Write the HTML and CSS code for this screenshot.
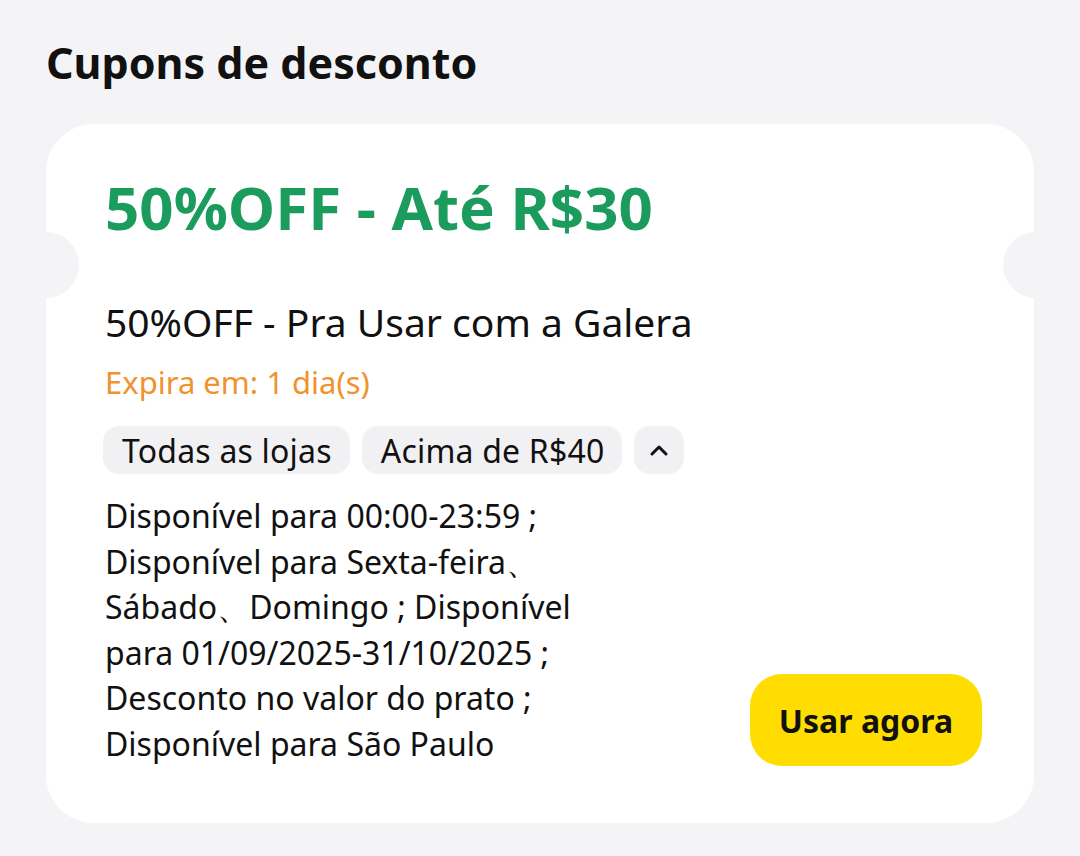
FILE: index.html
```html
<!DOCTYPE html>
<html lang="pt-br">
<head>
    <meta charset="UTF-8">
    <meta name="viewport" content="width=device-width, initial-scale=1.0">
    <title>Cupons de desconto</title>
    <link rel="stylesheet" href="styles.css">
</head>
<body>
    <div class="page">
        <h1 class="titulo">Cupons de desconto</h1>
        <div class="cupom">
            <h2 class="cupom-valor">50%OFF - Até R$30</h2>
            <div class="cupom-nome">50%OFF - Pra Usar com a Galera</div>
            <div class="cupom-expira">Expira em: 1 dia(s)</div>
            <div class="tags">
                <span class="tag">Todas as lojas</span>
                <span class="tag">Acima de R$40</span>
                <span class="tag tag-toggle">
                    <svg width="20" height="14" viewBox="0 0 20 14"><path d="M3 11 L10 4 L17 11" fill="none" stroke="#111" stroke-width="3" stroke-linecap="round" stroke-linejoin="round"/></svg>
                </span>
            </div>
            <div class="cupom-rodape">
                <p class="regras">Disponível para 00:00-23:59 ; Disponível para Sexta-feira、Sábado、Domingo ; Disponível para 01/09/2025-31/10/2025 ; Desconto no valor do prato ; Disponível para São Paulo</p>
                <button class="btn-usar">Usar agora</button>
            </div>
        </div>
    </div>
</body>
</html>
```

FILE: styles.css
```css
body {
    margin: 0;
    background: #f4f4f6;
    font-family: 'Noto Sans', 'Open Sans', Arial, sans-serif;
    color: #111;
}
.page {
    padding: 37px 46px 32px;
}
.titulo {
    margin: 0;
    font-size: 43px;
    line-height: 52px;
    font-weight: bold;
    color: #111;
}
.cupom {
    position: relative;
    margin-top: 35px;
    background: white;
    border-radius: 48px;
    padding: 48px 52px 57px 59px;
}
.cupom::before, .cupom::after {
    content: "";
    position: absolute;
    width: 66px;
    height: 66px;
    border-radius: 50%;
    background: #f4f4f6;
    top: 108px;
}
.cupom::before {
    left: -33px;
}
.cupom::after {
    right: -35px;
}
.cupom-valor {
    margin: 0;
    font-size: 60px;
    line-height: 70px;
    font-weight: bold;
    color: #1b9b5c;
}
.cupom-nome {
    margin-top: 56px;
    font-size: 39px;
    line-height: 48px;
}
.cupom-expira {
    margin-top: 16px;
    font-size: 31px;
    line-height: 40px;
    color: #f0922e;
}
.tags {
    display: flex;
    gap: 12px;
    margin-top: 24px;
    margin-left: -2px;
}
.tag {
    display: flex;
    align-items: center;
    height: 48px;
    padding: 0 18px 0 19px;
    background: #f1f1f3;
    border-radius: 16px;
    font-size: 32px;
    letter-spacing: 0.2px;
}
.tag-toggle {
    padding: 0 15px;
}
.cupom-rodape {
    display: flex;
    justify-content: space-between;
    align-items: flex-end;
    margin-top: 19px;
}
.regras {
    margin: 0;
    width: 485px;
    font-size: 32px;
    line-height: 45.5px;
}
.btn-usar {
    width: 232px;
    height: 92px;
    border: none;
    border-radius: 32px;
    background: #ffdd00;
    color: #111;
    font-family: inherit;
    font-size: 32px;
    font-weight: bold;
}
```
